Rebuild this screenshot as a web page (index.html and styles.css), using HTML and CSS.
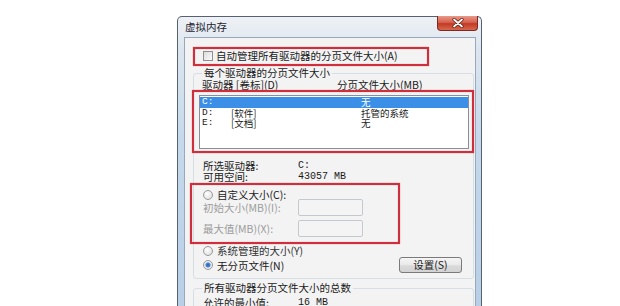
FILE: index.html
```html
<!DOCTYPE html>
<html lang="zh-CN">
<head>
<meta charset="utf-8">
<title>虚拟内存</title>
<link rel="stylesheet" href="styles.css">
</head>
<body>
<div class="window">
  <div class="titlebar">
    <span class="title">虚拟内存</span>
    <div class="close">
      <svg width="14" height="10" viewBox="0 0 14 10"><path d="M3 1.5 L11 8.5 M11 1.5 L3 8.5" stroke="#5a1a12" stroke-width="3.2" stroke-linecap="round"/><path d="M3 1.5 L11 8.5 M11 1.5 L3 8.5" stroke="#fff" stroke-width="1.8" stroke-linecap="round"/></svg>
    </div>
  </div>
  <div class="client">
    <div class="check-row"><span class="checkbox"></span><span>自动管理所有驱动器的分页文件大小(A)</span></div>
    <fieldset class="group group-drive">
      <legend>每个驱动器的分页文件大小</legend>
      <div class="list-head"><span>驱动器 [卷标](D)</span><span>分页文件大小(MB)</span></div>
      <div class="listbox">
        <div class="list-row selected"><span class="mono">C:</span><span></span><span>无</span></div>
        <div class="list-row"><span class="mono">D:</span><span>[软件]</span><span>托管的系统</span></div>
        <div class="list-row"><span class="mono">E:</span><span>[文档]</span><span>无</span></div>
      </div>
      <div class="info-row first"><span>所选驱动器:</span><span class="mono">C:</span></div>
      <div class="info-row"><span>可用空间:</span><span class="mono">43057 MB</span></div>
      <div class="radio-row custom"><span class="radio"></span><span>自定义大小(C):</span></div>
      <div class="field-row first"><span>初始大小(MB)(I):</span><span class="input"></span></div>
      <div class="field-row"><span>最大值(MB)(X):</span><span class="input"></span></div>
      <div class="radio-row system"><span class="radio"></span><span>系统管理的大小(Y)</span></div>
      <div class="radio-row none">
        <span class="radio checked"></span><span>无分页文件(N)</span>
        <span class="button">设置(S)</span>
      </div>
    </fieldset>
    <fieldset class="group group-total">
      <legend>所有驱动器分页文件大小的总数</legend>
      <div class="info-row"><span>允许的最小值:</span><span class="mono">16 MB</span></div>
    </fieldset>
  </div>
</div>
<div class="mark mark-auto"></div>
<div class="mark mark-list"></div>
<div class="mark mark-custom"></div>
</body>
</html>
```

FILE: styles.css
```css
html, body {
  margin: 0;
  padding: 0;
  background: #ffffff;
  width: 620px;
  height: 306px;
  overflow: hidden;
}

body {
  position: relative;
  font-family: "Noto Sans CJK SC", "Liberation Sans", sans-serif;
  font-size: 10.5px;
  color: #1a1a1a;
}

.mono {
  font-family: "Liberation Mono", "Noto Sans CJK SC", monospace;
  font-size: 10px;
}

.window {
  box-sizing: border-box;
  margin: 16px 0 0 177px;
  width: 305px;
  height: 300px;
  border: 1px solid #56626f;
  border-bottom: none;
  border-radius: 5px 5px 0 0;
  padding: 0 5px 0 6px;
  background: linear-gradient(180deg, #eef1f5 0px, #dde6ef 30px, #c6d9ec 120px, #b8cfe7 290px);
}

.titlebar {
  height: 20px;
  display: flex;
  justify-content: space-between;
  align-items: flex-start;
}

.title {
  line-height: 20px;
  padding-left: 1px;
  color: #1c2430;
}

.close {
  width: 41px;
  height: 15px;
  margin-top: -1px;
  margin-right: -2px;
  border: 1px solid #7a2a22;
  border-top: none;
  border-radius: 0 0 4px 4px;
  background: linear-gradient(180deg, #e89a8a 0%, #d7614e 45%, #c23a24 55%, #d8684f 100%);
  display: flex;
  align-items: center;
  justify-content: center;
  box-sizing: border-box;
}

.client {
  box-sizing: border-box;
  height: 280px;
  background: #f3f3f3;
  border: 1px solid #97a8ba;
  border-bottom: none;
  padding: 0 1px 0 8px;
}

.check-row {
  margin-top: 12px;
  height: 12px;
  padding-left: 10px;
  display: flex;
  align-items: center;
  gap: 3px;
  line-height: 12px;
}

.checkbox {
  width: 8px;
  height: 8px;
  border: 1px solid #8e8f8f;
  background: linear-gradient(135deg, #dcdcdc, #fbfbfb);
}

.group {
  margin: 5px 0 0 0;
  padding: 0;
  border: 1px solid #d5dfe5;
  border-radius: 3px;
  min-width: 0;
}

.group legend {
  margin-left: 8px;
  padding: 0 2px;
  line-height: 12px;
  height: 12px;
}

.group-drive {
  height: 212px;
  box-sizing: border-box;
}

.list-head {
  display: grid;
  grid-template-columns: 135px 1fr;
  padding-left: 8px;
  height: 11px;
  line-height: 11px;
}

.listbox {
  margin: 5px 0 0 5px;
  width: 270px;
  height: 54px;
  box-sizing: border-box;
  border: 1px solid #8a8f97;
  background: #ffffff;
  padding-top: 1px;
}

.list-row {
  display: grid;
  grid-template-columns: 29px 130px 1fr;
  height: 10.5px;
  line-height: 10.5px;
  font-size: 9.5px;
  padding-left: 2px;
}

.list-row .mono {
  font-size: 9.5px;
}

.list-row.selected {
  background: #3b8fe6;
  color: #ffffff;
}

.info-row {
  display: grid;
  grid-template-columns: 95px 1fr;
  height: 11px;
  line-height: 11px;
  padding-left: 9px;
}

.info-row.first {
  margin-top: 11px;
}

.radio-row {
  display: flex;
  align-items: center;
  height: 11px;
  line-height: 11px;
  padding-left: 9px;
  gap: 4px;
}

.radio-row.custom {
  margin-top: 7px;
}

.radio-row.system {
  margin-top: 8px;
  color: #333;
}

.radio-row.none {
  margin-top: 1px;
  height: 16px;
}

.radio {
  width: 8px;
  height: 8px;
  border: 1px solid #9a9a9a;
  border-radius: 50%;
  background: radial-gradient(circle at 40% 35%, #ffffff, #d8d8d8);
  flex: none;
}

.radio.checked {
  background: radial-gradient(circle, #2c5fa8 0, #4a86d0 2px, #e2e8f0 3px, #f8f8f8 100%);
}

.field-row {
  display: grid;
  grid-template-columns: 95px 65px;
  align-items: center;
  height: 17px;
  padding-left: 9px;
  color: #9c9c9c;
  margin-top: 4px;
}

.field-row.first {
  margin-top: -1px;
}

.input {
  height: 17px;
  box-sizing: border-box;
  border: 1px solid #c4c9cf;
  border-radius: 2px;
  background: #f4f4f4;
}

.button {
  margin-left: auto;
  margin-right: 11px;
  width: 63px;
  height: 16px;
  box-sizing: border-box;
  border: 1px solid #7a7a7a;
  border-radius: 3px;
  background: linear-gradient(180deg, #f5f5f5 0%, #e9e9e9 50%, #dadada 55%, #d3d3d3 100%);
  text-align: center;
  line-height: 14px;
}

.group-total {
  margin-top: 3px;
  height: 40px;
  box-sizing: border-box;
}

.group-total .info-row {
  margin-top: 3px;
}

.mark {
  position: absolute;
  box-sizing: border-box;
  border: 2px solid #cf2f3c;
  box-shadow: 0 0 1px #d86a72, inset 0 0 1px #d86a72;
}

.mark-auto {
  left: 193px;
  top: 47px;
  width: 236px;
  height: 19px;
}

.mark-list {
  left: 192px;
  top: 90px;
  width: 282px;
  height: 63px;
}

.mark-custom {
  left: 190px;
  top: 183px;
  width: 210px;
  height: 61px;
}
```
